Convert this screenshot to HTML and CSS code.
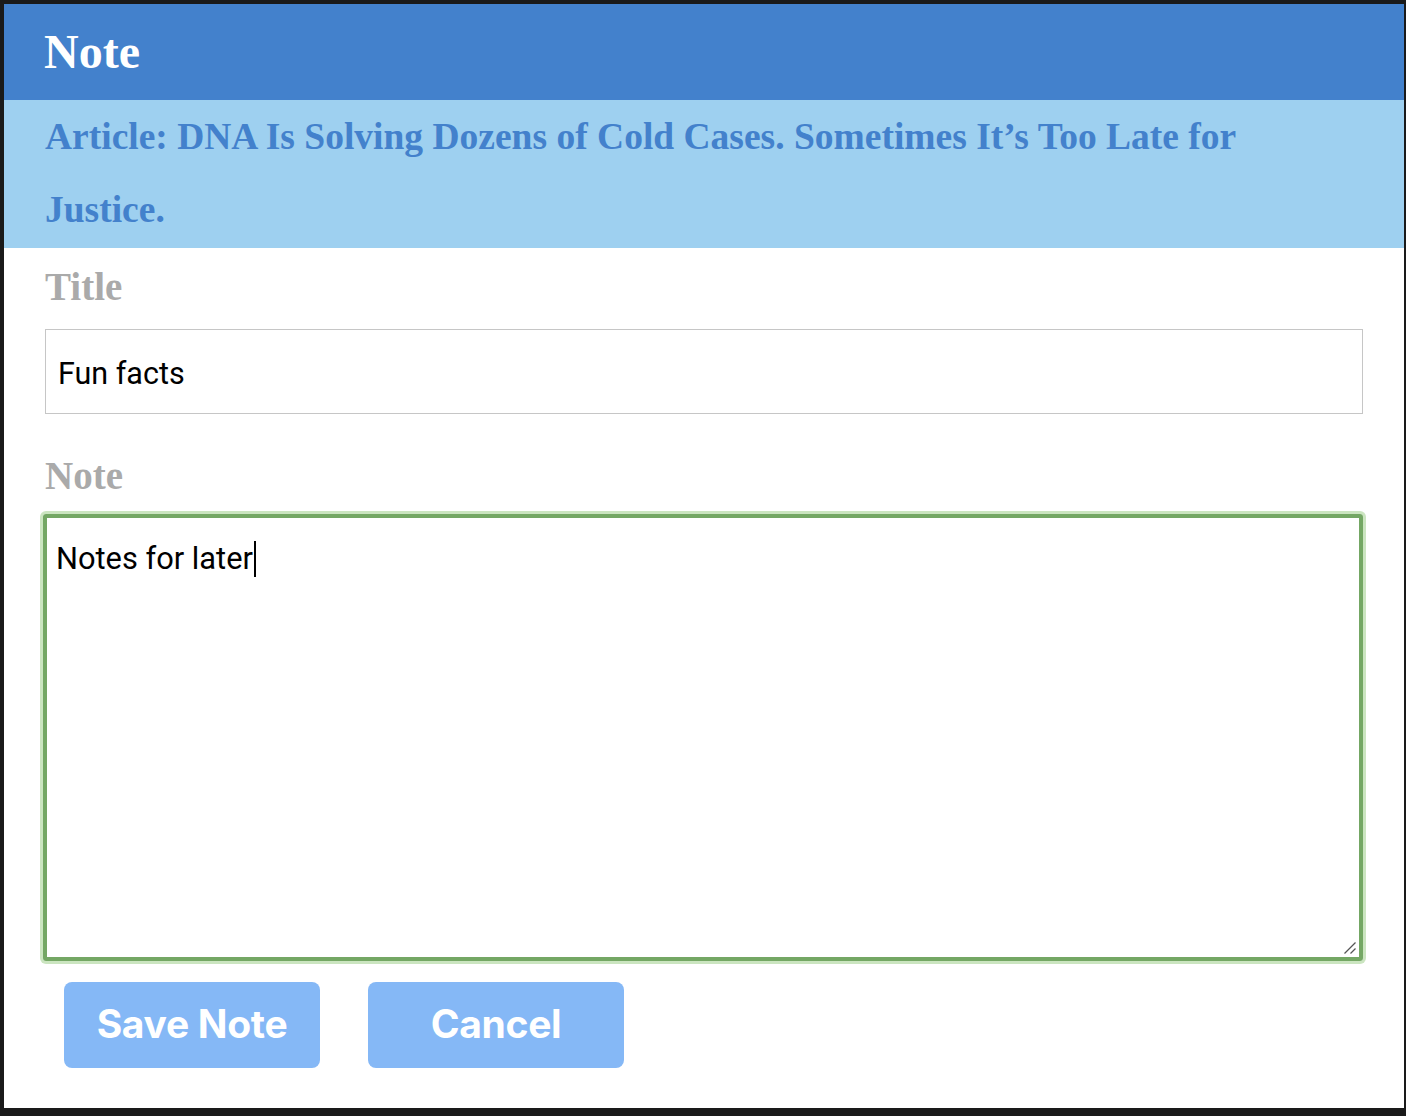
FILE: index.html
```html
<!DOCTYPE html>
<html lang="en">
<head>
<meta charset="utf-8">
<title>Note</title>
<link rel="stylesheet" href="styles.css">
</head>
<body>
<div class="panel">
  <header class="head"><h1 class="head-title">Note</h1></header>
  <div class="article">Article: DNA Is Solving Dozens of Cold Cases. Sometimes It’s Too Late for Justice.</div>
  <form class="form">
    <label class="label label-first">Title</label>
    <div class="input">Fun facts</div>
    <label class="label label-second">Note</label>
    <div class="textarea">
      <span class="ta-text">Notes for later</span><span class="caret"></span>
      <svg class="grip" width="14" height="14" viewBox="0 0 14 14"><path d="M1.5 12.5 L12.5 1.5 M7.5 12.5 L12.5 7.5" stroke="#555" stroke-width="1.3" fill="none"/></svg>
    </div>
    <div class="actions">
      <button type="button" class="btn">Save Note</button>
      <button type="button" class="btn">Cancel</button>
    </div>
  </form>
</div>
</body>
</html>
```
FILE: styles.css
```css
html, body {
  margin: 0;
  padding: 0;
  background: #1a1a1a;
}
body {
  padding: 4px 2px 8px 4px;
}
.panel {
  width: 1400px;
  height: 1104px;
  background: #ffffff;
}
.head {
  background: #4381cc;
  height: 96px;
  padding-left: 40px;
}
.head-title {
  margin: 0;
  font-family: "Liberation Serif", serif;
  font-weight: bold;
  font-size: 48px;
  line-height: 96px;
  color: #ffffff;
}
.article {
  background: #9ed0f0;
  color: #4381cc;
  font-family: "Liberation Serif", serif;
  font-weight: bold;
  font-size: 37.5px;
  line-height: 73px;
  padding: 0 140px 2px 41px;
  height: 148px;
  box-sizing: border-box;
}
.form {
  padding: 0 41px;
  display: flex;
  flex-direction: column;
}
.label {
  display: block;
  font-family: "Liberation Serif", serif;
  font-weight: bold;
  font-size: 39px;
  line-height: 48px;
  color: #aaaaaa;
}
.label-first { margin-top: 15px; margin-bottom: 18px; }
.label-second { margin-top: 38px; margin-bottom: 14px; }
.input {
  height: 85px;
  box-sizing: border-box;
  border: 1px solid #c6c6c6;
  padding: 4px 0 0 12px;
  font-family: Roboto, "Liberation Sans", sans-serif;
  font-size: 30.5px;
  line-height: 79px;
  color: #000;
}
.textarea {
  position: relative;
  margin-left: -2px;
  width: 1320px;
  height: 447px;
  box-sizing: border-box;
  border: 4px solid #74a764;
  box-shadow: 0 0 0 3px #cbe5c0;
  border-radius: 3px;
  padding: 23px 9px;
  font-family: Roboto, "Liberation Sans", sans-serif;
  font-size: 30.8px;
  line-height: 36px;
  color: #000;
}
.caret {
  display: inline-block;
  width: 2px;
  height: 36px;
  background: #000;
  vertical-align: top;
  margin-left: 1px;
}
.grip {
  position: absolute;
  right: 2px;
  bottom: 2px;
}
.actions {
  display: flex;
  gap: 48px;
  margin-top: 21px;
  padding-left: 19px;
}
.btn {
  width: 256px;
  height: 86px;
  border: none;
  border-radius: 8px;
  background: #85b8f6;
  color: #ffffff;
  font-family: Inter, "Liberation Sans", sans-serif;
  font-weight: 700;
  font-size: 39px;
  letter-spacing: -0.3px;
  padding: 0 0 4px 0;
}
```
